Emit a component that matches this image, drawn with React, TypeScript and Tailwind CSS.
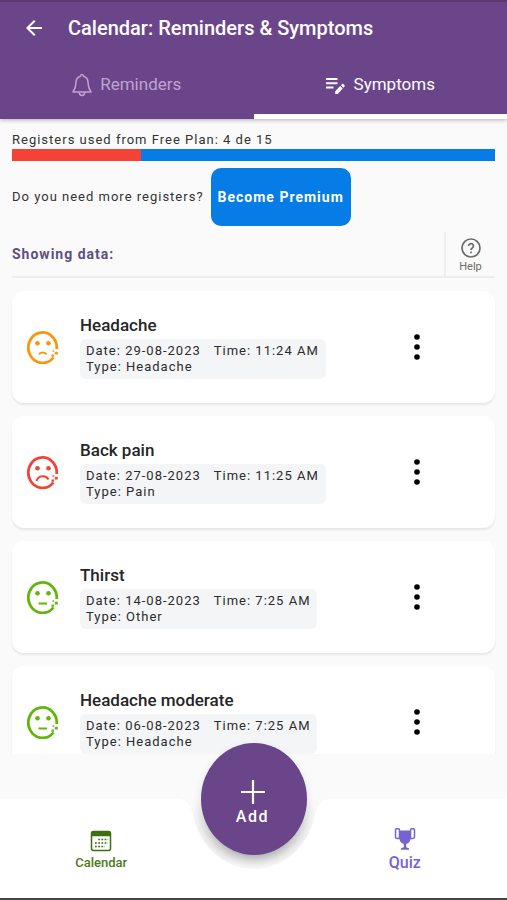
import React, { useState } from "react";
import { MdArrowBack } from "react-icons/md";

type Mood = "sad" | "bad" | "neutral";

type Symptom = {
  id: number;
  title: string;
  date: string;
  time: string;
  type: string;
  mood: Mood;
};

const symptoms: Symptom[] = [
  { id: 1, title: "Headache", date: "29-08-2023", time: "11:24 AM", type: "Headache", mood: "sad" },
  { id: 2, title: "Back pain", date: "27-08-2023", time: "11:25 AM", type: "Pain", mood: "bad" },
  { id: 3, title: "Thirst", date: "14-08-2023", time: "7:25 AM", type: "Other", mood: "neutral" },
  { id: 4, title: "Headache moderate", date: "06-08-2023", time: "7:25 AM", type: "Headache", mood: "neutral" },
];

const moods = {
  sad: { color: "text-[#fb960c]", mouth: "M12 24.500c1.200-2.600 6.300-2.600 7.500 0" },
  bad: { color: "text-[#f04438]", mouth: "M9.500 26c2-6 9.500-6 12-1.500" },
  neutral: { color: "text-[#62b50a]", mouth: "M11.500 23.500h8.500" },
};

function MoodIcon({ mood }: { mood: Mood }) {
  return (
    <svg viewBox="0 0 32 34" className={`h-[34px] w-8 shrink-0 ${moods[mood].color}`} fill="none" stroke="currentColor" aria-hidden="true">
      <path d="M29.700 19A14.200 15.200 0 1 0 26.400 27.500" strokeWidth="2.800" />
      <path d={moods[mood].mouth} strokeWidth="2" />
      <g fill="currentColor" stroke="none">
        <circle cx="10.500" cy="13.300" r="2.300" />
        <circle cx="21.500" cy="13.300" r="2.300" />
        <rect x="27.800" y="21.800" width="3" height="2.700" />
        <rect x="24.500" y="24.500" width="2.500" height="2.300" />
        <rect x="25.500" y="20.300" width="1.600" height="1.500" />
      </g>
    </svg>
  );
}

function SymptomCard({ symptom }: { symptom: Symptom }) {
  return (
    <li className="flex h-28 shrink-0 items-center rounded-xl bg-white pl-[15px] shadow-[0_2px_2px_rgba(0,0,0,0.08)]">
      <MoodIcon mood={symptom.mood} />
      <div className="ml-[21px] flex-1 pb-0.5">
        <h2 className="text-[17px] leading-6 font-medium text-[#252525]">{symptom.title}</h2>
        <div className="mt-0.5 w-fit rounded-md bg-[#f3f5f7] py-1 pr-[7px] pl-1.5 text-[13px] leading-4 tracking-[1px] text-[#2c2c2c]">
          <p className="flex gap-[13px]">
            <span>Date: {symptom.date}</span>
            <span>Time: {symptom.time}</span>
          </p>
          <p>Type: {symptom.type}</p>
        </div>
      </div>
      <button type="button" aria-label="More options" className="mr-[62px] p-1">
        <svg viewBox="0 0 24 28" className="h-7 w-6" fill="black" aria-hidden="true">
          <circle cx="12" cy="4" r="2.800" />
          <circle cx="12" cy="14" r="2.800" />
          <circle cx="12" cy="24" r="2.800" />
        </svg>
      </button>
    </li>
  );
}

export default function SymptomsPage() {
  const [tab, setTab] = useState("symptoms");
  const used = 4;
  const total = 15;

  return (
    <div className="flex h-screen flex-col border-b-2 border-[#444444] bg-[#fafafa] font-[Roboto,sans-serif]">
      <header className="relative z-10 border-t-2 border-[#5a3a74] bg-[#6b458a] text-white shadow-[0_1px_4px_rgba(0,0,0,0.3)]">
        <div className="flex h-[50px] items-center pt-px pl-[22px]">
          <button type="button" aria-label="Back">
            <MdArrowBack className="size-6" />
          </button>
          <h1 className="ml-[22px] text-xl font-medium">Calendar: Reminders & Symptoms</h1>
        </div>
        <div className="grid h-[67px] grid-cols-2 text-[17px]" role="tablist">
          <button
            type="button"
            role="tab"
            aria-selected={tab === "reminders"}
            onClick={() => setTab("reminders")}
            className="flex items-center justify-center gap-2 border-b-[5px] border-transparent pt-[3px] text-[#bfa3d2] aria-selected:border-white aria-selected:text-white"
          >
            <svg viewBox="0 0 20 24" className="h-6 w-5" fill="none" stroke="currentColor" strokeWidth="1.500" strokeLinejoin="round" aria-hidden="true">
              <path d="M8.500 3.200a1.500 1.800 0 0 1 3 0C14.500 4 16 6.500 16 9.500c0 4.500 1 6.500 3 9.500H1c2-3 3-5 3-9.500 0-3 1.500-5.500 4.500-6.300z" />
              <path d="M7.300 19.300a2.700 3.200 0 0 0 5.400 0" />
            </svg>
            Reminders
          </button>
          <button
            type="button"
            role="tab"
            aria-selected={tab === "symptoms"}
            onClick={() => setTab("symptoms")}
            className="flex items-center justify-center gap-2 border-b-[5px] border-transparent pt-[3px] text-[#bfa3d2] aria-selected:border-white aria-selected:text-white"
          >
            <svg viewBox="0 0 20 20" className="size-5" fill="currentColor" aria-hidden="true">
              <path d="M0 3h11.500v2H0zM0 7.300h11.500v2H0zM0 11.600h7.500v2H0z" />
              <path d="M9.200 16.300v2.700h2.500l5-5.400-2.500-2.600zM15 10.200l2.400 2.600 1.100-1.200c.4-.4.4-.9 0-1.300l-1.200-1.200c-.4-.4-.9-.4-1.200 0z" />
            </svg>
            Symptoms
          </button>
        </div>
      </header>

      <main className="flex min-h-0 flex-1 flex-col px-3 pt-3">
        <p className="text-[13px] leading-[18px] tracking-[1px] text-[#333333]">
          Registers used from Free Plan: {used} de {total}
        </p>
        <div className="h-3 bg-[#067ce6]" role="progressbar" aria-label="Registers used" aria-valuenow={used} aria-valuemax={total}>
          <div className="h-full bg-[#f44336]" style={{ width: `${(used / total) * 100}%` }} />
        </div>
        <div className="mt-[7px] flex items-center gap-[7px]">
          <p className="text-[13px] tracking-[1px] text-[#333333]">Do you need more registers?</p>
          <button type="button" className="h-[58px] rounded-[10px] bg-[#067ce6] px-[7px] text-sm font-bold tracking-[1px] text-white">
            Become Premium
          </button>
        </div>
        <div className="mt-1.5 flex h-[46px] shrink-0 items-center justify-between border-b-2 border-[#eeeeee]">
          <p className="text-sm font-bold tracking-[1px] text-[#5c4f86]">Showing data:</p>
          <button type="button" className="flex h-full w-[51px] flex-col items-center justify-center border-l-2 border-[#eeeeee] pt-[3px] text-[11px] leading-3 text-[#6b6b6b]">
            <svg viewBox="0 0 20 20" className="mb-[3px] size-5" fill="none" stroke="currentColor" aria-hidden="true">
              <circle cx="10" cy="10" r="9" strokeWidth="1.700" />
              <path d="M7.600 8a2.400 2.400 0 1 1 3.700 2c-.9.600-1.300 1-1.300 2.100M10 13.500v1.700" strokeWidth="1.700" />
            </svg>
            Help
          </button>
        </div>
        <ul className="-mx-3 flex min-h-0 flex-1 flex-col gap-[13px] overflow-hidden px-3 pt-[13px]">
          {symptoms.map((symptom) => (
            <SymptomCard key={symptom.id} symptom={symptom} />
          ))}
        </ul>
      </main>

      <nav className="relative mt-[45px] grid h-[99px] shrink-0 grid-cols-2 bg-white font-medium">
        {/* notch under the add button */}
        <svg viewBox="0 0 150 72" className="absolute top-0 left-1/2 h-[72px] w-[150px] -translate-x-1/2" aria-hidden="true">
          <defs>
            <radialGradient id="notch" cx="75" cy="2" r="69" gradientUnits="userSpaceOnUse">
              <stop offset="0.78" stopColor="#cccccc" />
              <stop offset="0.88" stopColor="#e6e6e6" />
              <stop offset="1" stopColor="#fbfbfb" />
            </radialGradient>
            <linearGradient id="fade" x1="0" y1="0" x2="0" y2="1">
              <stop offset="0" stopColor="#fafafa" />
              <stop offset="0.2" stopColor="#fafafa" stopOpacity="0.8" />
              <stop offset="0.8" stopColor="#fafafa" stopOpacity="0" />
            </linearGradient>
          </defs>
          <path d="M0 0c8 1 12 6 14 14 5 32 30 56 61 56s56-24 61-56c2-8 6-13 14-14z" fill="url(#notch)" />
          <path d="M0 0c8 1 12 6 14 14 5 32 30 56 61 56s56-24 61-56c2-8 6-13 14-14z" fill="url(#fade)" />
        </svg>
        <a href="#calendar" className="flex flex-col items-center pt-[31px] pr-[51px] text-[13px] leading-5 text-[#4b7a20]">
          <svg viewBox="0 0 22 22" className="mb-px size-[22px]" fill="none" stroke="#3e6f10" aria-hidden="true">
            <rect x="1.500" y="1.500" width="19" height="19" rx="2" strokeWidth="1.500" />
            <path d="M1.500 4h19" strokeWidth="4.500" />
            <path d="M8.200 9.500h10M5 13h13M5 16.500h10" strokeWidth="1.500" strokeDasharray="1.800 1.400" />
          </svg>
          Calendar
        </a>
        <a href="#quiz" className="flex flex-col items-center pt-7 pl-[49px] text-base leading-5 text-[#7663d0]">
          <svg viewBox="0 0 22 24" className="mb-0.5 h-6 w-[22px]" fill="currentColor" aria-hidden="true">
            <path d="M5.500 3.500h11v8c0 3-2 5-4.300 5.500v3.200l2.800 1v1.500H7v-1.500l2.800-1V17c-2.300-.5-4.300-2.500-4.300-5.500z" />
            <path d="M5.500 11.500H3.200c-1 0-1.700-.8-1.700-1.700V3c0-.7.500-1.200 1.200-1.200h1.600c.7 0 1.200.5 1.200 1.200zM16.500 11.500h2.300c1 0 1.700-.8 1.700-1.700V3c0-.7-.5-1.200-1.200-1.200h-1.600c-.7 0-1.200.5-1.200 1.200z" fill="none" stroke="currentColor" strokeWidth="1.500" />
          </svg>
          Quiz
        </a>
        <button
          type="button"
          className="absolute -top-14 left-1/2 flex h-28 w-[106px] -translate-x-1/2 flex-col items-center justify-center rounded-[50%] bg-[#6b458a] pt-2 pr-0.5 text-base leading-5 tracking-widest text-white shadow-[0_4px_8px_rgba(0,0,0,0.12)]"
        >
          <svg viewBox="0 0 26 26" className="mb-0.5 size-[26px]" fill="none" stroke="currentColor" strokeWidth="2.200" aria-hidden="true">
            <path d="M13 1v24M1 13h24" />
          </svg>
          Add
        </button>
      </nav>
    </div>
  );
}
